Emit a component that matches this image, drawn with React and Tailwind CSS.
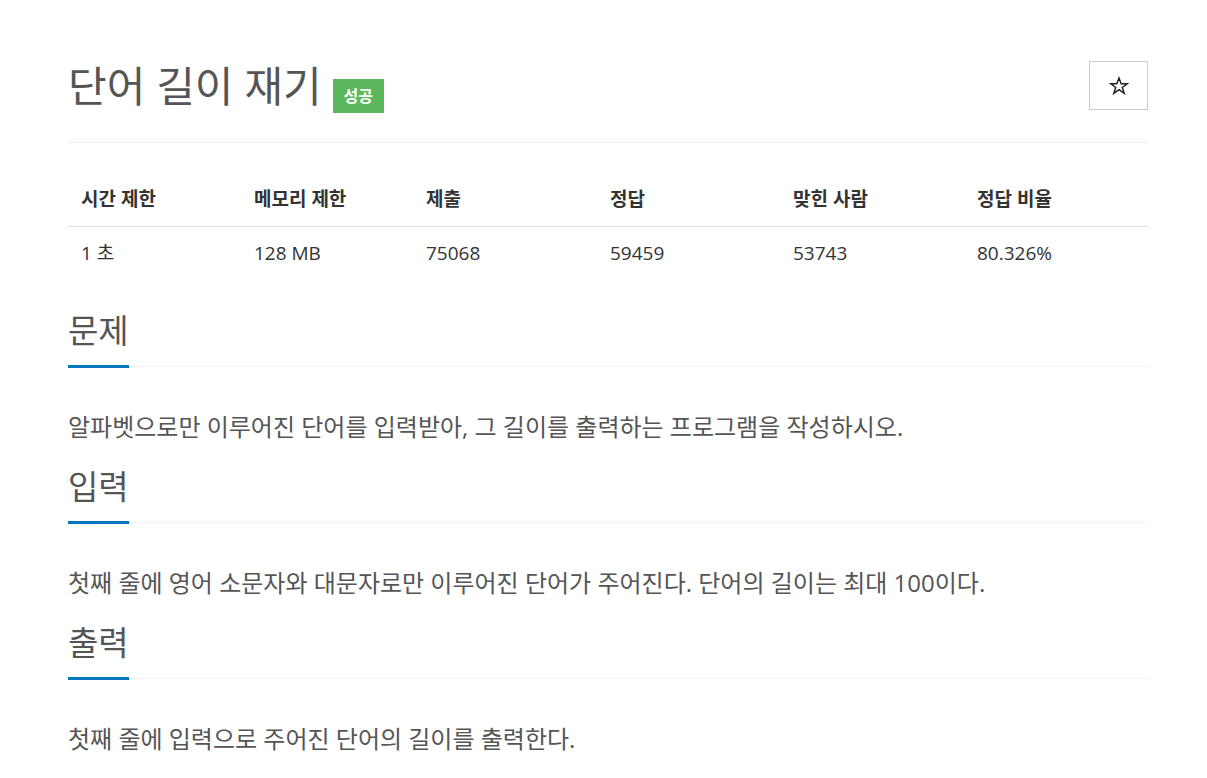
import { useState } from 'react';

const FONT = { fontFamily: '"Open Sans", "Noto Sans CJK KR", sans-serif' };

const stats = [
  { label: '시간 제한', value: '1 초' },
  { label: '메모리 제한', value: '128 MB' },
  { label: '제출', value: '75068' },
  { label: '정답', value: '59459' },
  { label: '맞힌 사람', value: '53743' },
  { label: '정답 비율', value: '80.326%' },
];

const sections = [
  { title: '문제', body: '알파벳으로만 이루어진 단어를 입력받아, 그 길이를 출력하는 프로그램을 작성하시오.' },
  { title: '입력', body: '첫째 줄에 영어 소문자와 대문자로만 이루어진 단어가 주어진다. 단어의 길이는 최대 100이다.' },
  { title: '출력', body: '첫째 줄에 입력으로 주어진 단어의 길이를 출력한다.' },
];

function StarIcon() {
  return (
    <svg width="20" height="20" viewBox="0 0 24 24" fill="none" stroke="#222" strokeWidth="1.8" strokeLinejoin="miter">
      <polygon points="12,2.5 14.6,9.3 21.8,9.3 16,13.7 18.2,20.8 12,16.5 5.8,20.8 8,13.7 2.2,9.3 9.4,9.3" />
    </svg>
  );
}

function Section({ title, body, first }) {
  return (
    <div className={first ? 'mt-[31px]' : 'mt-[25px]'}>
      {/* headline with blue underline */}
      <div className="border-b border-dotted border-[#e6e6e6]">
        <h2 className="inline-block -mb-[2px] pb-[14px] border-b-[3px] border-[#0076c0] text-[33px] leading-[40px] font-normal text-[#555]">
          {title}
        </h2>
      </div>
      <p className="mt-[45px] text-[24px] leading-[30px] text-[#555]">{body}</p>
    </div>
  );
}

export default function App() {
  const [starred, setStarred] = useState(false);

  return (
    <div className="min-h-screen bg-white" style={FONT}>
      <div className="ml-[68px] w-[1080px] pt-[61px] pb-10">
        {/* Title row */}
        <div className="flex h-[49px] items-start justify-between">
          <div className="flex items-start">
            <h1 className="text-[42px] leading-[50px] font-normal text-[#555]">단어 길이 재기</h1>
            <span className="ml-[11px] mt-[18px] flex h-[34px] w-[51px] items-center justify-center bg-[#5cb85c] text-[16px] font-semibold text-white">
              성공
            </span>
          </div>
          <button
            onClick={() => setStarred(s => !s)}
            className="flex h-[49px] w-[59px] items-center justify-center border border-[#ccc] bg-white"
          >
            <StarIcon />
          </button>
        </div>
        <div className="mt-[32px] border-b border-[#eee]" />

        {/* Stats table */}
        <div className="mt-[30px] grid grid-cols-[173px_172px_184px_183px_184px_184px] text-[19px] text-[#333]">
          {stats.map(s => (
            <div key={s.label} className="border-b border-[#ddd] px-[13px] py-[14px] leading-[25px] font-bold">
              {s.label}
            </div>
          ))}
          {stats.map(s => (
            <div key={s.label + 'v'} className="px-[13px] py-[14px] leading-[25px]">
              {s.value}
            </div>
          ))}
        </div>

        {sections.map((s, i) => (
          <Section key={s.title} title={s.title} body={s.body} first={i === 0} />
        ))}
      </div>
    </div>
  );
}
